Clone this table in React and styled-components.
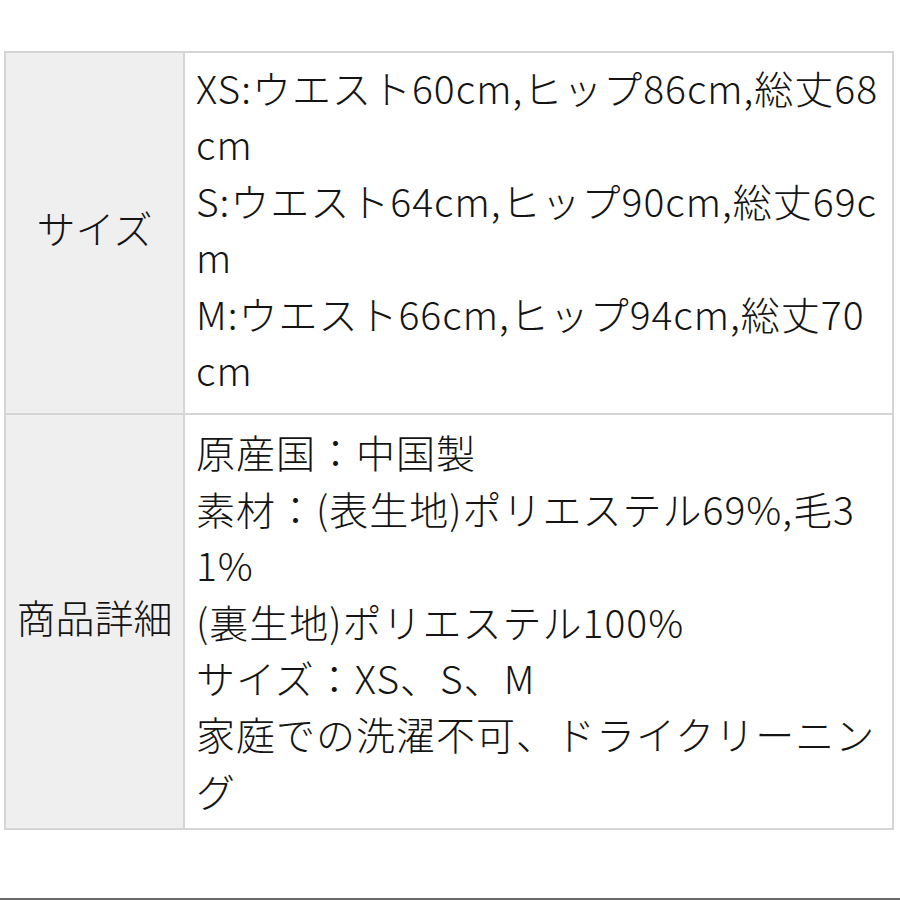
import React from "react";
import styled, { createGlobalStyle } from "styled-components";

const Global = createGlobalStyle`
  html, body { margin: 0; padding: 0; background: #ffffff; }
  body { font-family: "Noto Sans CJK JP", "Noto Sans", sans-serif; color: #141414; }
`;

const Page = styled.div`
  box-sizing: border-box;
  height: 900px;
  padding: 51px 6px 0 4px;
  border-bottom: 2px solid #6a6a6a;
`;

const Table = styled.table`
  width: 890px;
  border-collapse: collapse;
  table-layout: fixed;
  border: 2px solid #d5d5d5;
`;

const Head = styled.th`
  width: 179px;
  box-sizing: border-box;
  background: #efefef;
  border: 2px solid #d5d5d5;
  font-weight: 300;
  font-size: 39px;
  line-height: 56.4px;
  text-align: center;
  vertical-align: middle;
  padding: 0 4px 12px 4px;
  white-space: nowrap;
`;

const Cell = styled.td`
  background: #ffffff;
  border: 2px solid #d5d5d5;
  font-size: 39px;
  font-weight: 300;
  line-height: 56.4px;
  letter-spacing: 1px;
  padding: ${(p) => p.$pad};
  word-break: break-all;
  vertical-align: top;
`;

const Line = styled.div``;

const rows = [
  {
    head: "サイズ",
    pad: "6px 11px 16px 11px",
    lines: [
      "XS:ウエスト60cm,ヒップ86cm,総丈68cm",
      "S:ウエスト64cm,ヒップ90cm,総丈69cm",
      "M:ウエスト66cm,ヒップ94cm,総丈70cm",
    ],
  },
  {
    head: "商品詳細",
    pad: "8px 11px 10px 11px",
    lines: [
      "原産国：中国製",
      "素材：(表生地)ポリエステル69%,毛31%",
      "(裏生地)ポリエステル100%",
      "サイズ：XS、S、M",
      "家庭での洗濯不可、ドライクリーニング",
    ],
  },
];

export default function App() {
  return (
    <>
      <Global />
      <Page>
        <Table>
          <tbody>
            {rows.map((r) => (
              <tr key={r.head}>
                <Head>{r.head}</Head>
                <Cell $pad={r.pad}>
                  {r.lines.map((l) => (
                    <Line key={l}>{l}</Line>
                  ))}
                </Cell>
              </tr>
            ))}
          </tbody>
        </Table>
      </Page>
    </>
  );
}
